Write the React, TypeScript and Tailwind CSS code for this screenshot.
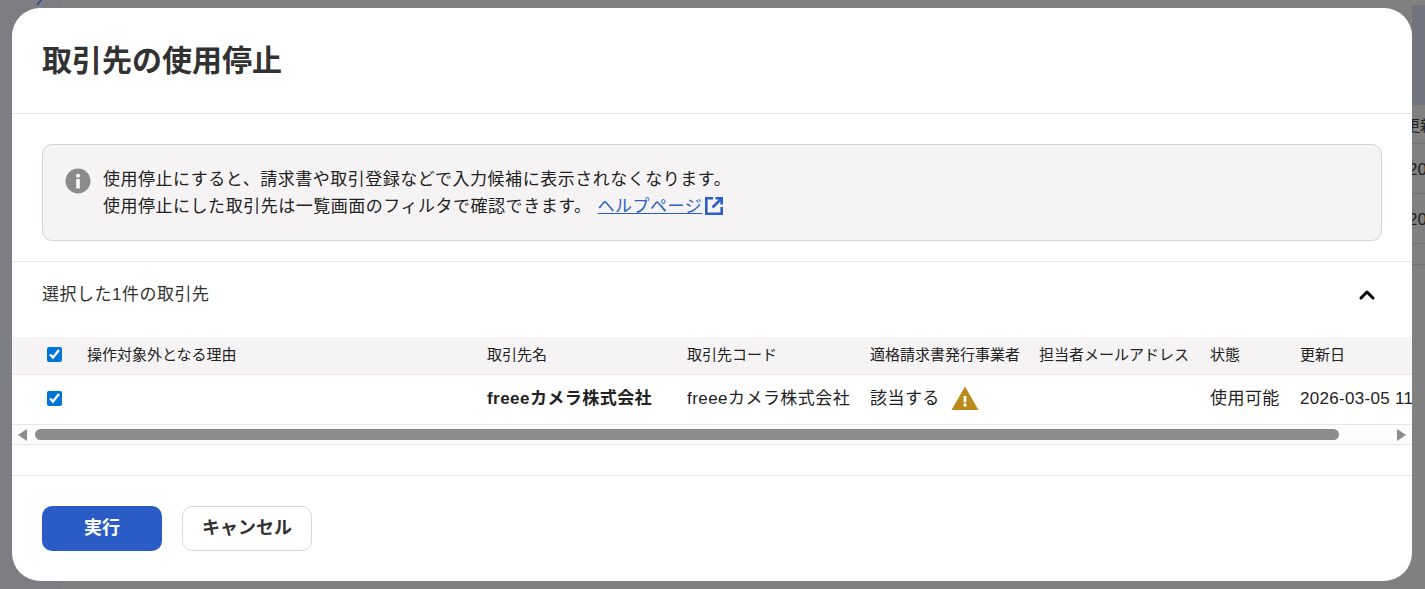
import { ChevronUp } from "lucide-react";

const JP = "font-['Liberation_Sans','Noto_Sans_CJK_JP',sans-serif]";

const COLUMNS = [
  { label: "操作対象外となる理由", width: "w-[400px]" },
  { label: "取引先名", width: "w-[200px]" },
  { label: "取引先コード", width: "w-[183px]" },
  { label: "適格請求書発行事業者", width: "w-[169px]" },
  { label: "担当者メールアドレス", width: "w-[171px]" },
  { label: "状態", width: "w-[90px]" },
  { label: "更新日", width: "w-[140px]" },
];

function Check() {
  return (
    <input
      type="checkbox"
      defaultChecked
      className="w-[15px] h-[15px] accent-[#0075d9] m-0 block"
    />
  );
}

function ExternalIcon() {
  return (
    <svg viewBox="0 0 20 20" className="w-5 h-5 block" fill="none" stroke="#2b5fc7" strokeWidth="2.6">
      <path d="M9 2.3H2.3v15.4h15.4V11" />
      <path d="M8.5 11.5L17 3M11.5 2.3h6.2v6.2" />
    </svg>
  );
}

function WarningIcon() {
  return (
    <svg viewBox="0 0 28 24" className="mb-[2px] w-[28px] h-[24px] shrink-0">
      <path d="M14 0.5L27.5 24H0.5z" fill="#bb8a1a" />
      <path d="M12.6 10h2.8v6.2h-2.8zM12.6 17.6h2.8v2.8h-2.8z" fill="#fff" />
    </svg>
  );
}

export default function App() {
  return (
    <div className={`relative h-[589px] w-[1425px] overflow-hidden bg-[#808080] ${JP}`}>
      <div className="absolute left-0 top-0 h-full w-[61px] border-r border-[#74758a] bg-[#7d7e83]" />
      <svg viewBox="0 0 8 6" className="absolute left-[35px] top-0 h-[6px] w-[8px]">
        <path d="M6 0L2 5" stroke="#2a3f8f" strokeWidth="1.5" />
      </svg>
      <div className="absolute right-0 top-[5px] h-[100px] w-[13px] bg-[#71747c]" />
      <div className="absolute right-0 top-[105px] w-[25px] overflow-hidden text-[#222]">
        <div className="h-[39px] border-b border-[#707070] pl-[5px] pt-[10px] text-[15px] whitespace-nowrap">更新日</div>
        <div className="h-[50px] border-b border-[#707070] pl-[8px] pt-[13px] text-[17px] whitespace-nowrap">2026</div>
        <div className="h-[50px] border-b border-[#707070] pl-[8px] pt-[13px] text-[17px] whitespace-nowrap">2026</div>
        <div className="h-[21px] border-b border-[#707070]" />
      </div>

      <div className="absolute left-3 top-2 flex h-[573px] w-[1400px] flex-col overflow-hidden rounded-[28px] bg-white text-[#323232]">
        <header className="h-[106px] shrink-0 border-b border-[#e8e6e6] px-[30px] pt-[34px]">
          <h1 className="text-[30px] font-bold leading-[38px]">取引先の使用停止</h1>
        </header>

        <div className="px-[30px] pt-[30px]">
          <div className="flex h-[97px] gap-[12px] rounded-[10px] border border-[#d6d3d3] bg-[#f5f3f4] px-[22px] pt-[21px] text-[17px] leading-[27px] tracking-[0.52px] text-[#222]">
            <svg viewBox="0 0 26 26" className="mt-[2px] h-[26px] w-[26px] shrink-0">
              <circle cx="13" cy="13" r="12.5" fill="#8c8a8a" />
              <circle cx="13" cy="7.8" r="2" fill="#fff" />
              <rect x="11.2" y="11" width="3.6" height="9.5" rx="0.6" fill="#fff" />
            </svg>
            <p>
              使用停止にすると、請求書や取引登録などで入力候補に表示されなくなります。
              <br />
              使用停止にした取引先は一覧画面のフィルタで確認できます。
              <a className="ml-[6px] text-[#2b5fc7] underline">ヘルプページ</a>
              <span className="ml-[2px] inline-block align-[-4px]"><ExternalIcon /></span>
            </p>
          </div>
        </div>

        <div className="mt-5 flex h-[66px] shrink-0 items-center justify-between border-t border-[#e8e6e6] pl-[30px] pr-[33px]">
          <span className="text-[17px] tracking-[0.5px]">選択した1件の取引先</span>
          <ChevronUp className="h-[24px] w-[24px] text-black" strokeWidth={3} />
        </div>

        <div className="mt-[10px] overflow-hidden text-[#222]">
          <div className="flex h-[38px] items-center border-b border-[#e8e6e6] bg-[#f5f3f4] text-[15px] whitespace-nowrap">
            <div className="mb-[2px] flex w-[75px] shrink-0 justify-start pl-[35px]"><Check /></div>
            {COLUMNS.map((col) => (
              <div key={col.label} className={`${col.width} shrink-0`}>{col.label}</div>
            ))}
          </div>
          <div className="flex h-[50px] items-center border-b border-[#e8e6e6] pb-[2px] text-[17px] tracking-[0.45px] whitespace-nowrap">
            <div className="flex w-[75px] shrink-0 pl-[35px]"><Check /></div>
            <div className="w-[400px] shrink-0" />
            <div className="w-[200px] shrink-0 font-bold">freeeカメラ株式会社</div>
            <div className="w-[183px] shrink-0">freeeカメラ株式会社</div>
            <div className="flex w-[169px] shrink-0 items-center gap-[11px]">該当する<WarningIcon /></div>
            <div className="w-[171px] shrink-0" />
            <div className="w-[90px] shrink-0">使用可能</div>
            <div className="w-[140px] shrink-0 tracking-[0.3px]">2026-03-05 11:00</div>
          </div>
          <div className="flex h-[20px] items-center border-b border-[#e8e6e6] bg-[#fcfcfc]">
            <svg viewBox="0 0 10 12" className="ml-[6px] h-[12px] w-[10px] shrink-0"><path d="M9 0v12L0 6z" fill="#8c8c8c" /></svg>
            <div className="ml-[7px] h-[11px] w-[1304px] shrink-0 rounded-full bg-[#8c8c8c]" />
            <svg viewBox="0 0 10 12" className="ml-[57px] h-[12px] w-[10px] shrink-0"><path d="M1 0v12l9-6z" fill="#8c8c8c" /></svg>
          </div>
        </div>

        <footer className="mt-[30px] flex h-[106px] shrink-0 gap-5 border-t border-[#e8e6e6] px-[30px] pt-[30px]">
          <button className="h-[45px] w-[120px] rounded-[10px] bg-[#2b5cc6] text-[18px] font-bold text-white">実行</button>
          <button className="h-[45px] w-[130px] rounded-[10px] border border-[#d9d7d7] bg-white text-[18px] font-bold text-[#323232]">キャンセル</button>
        </footer>
      </div>
    </div>
  );
}
